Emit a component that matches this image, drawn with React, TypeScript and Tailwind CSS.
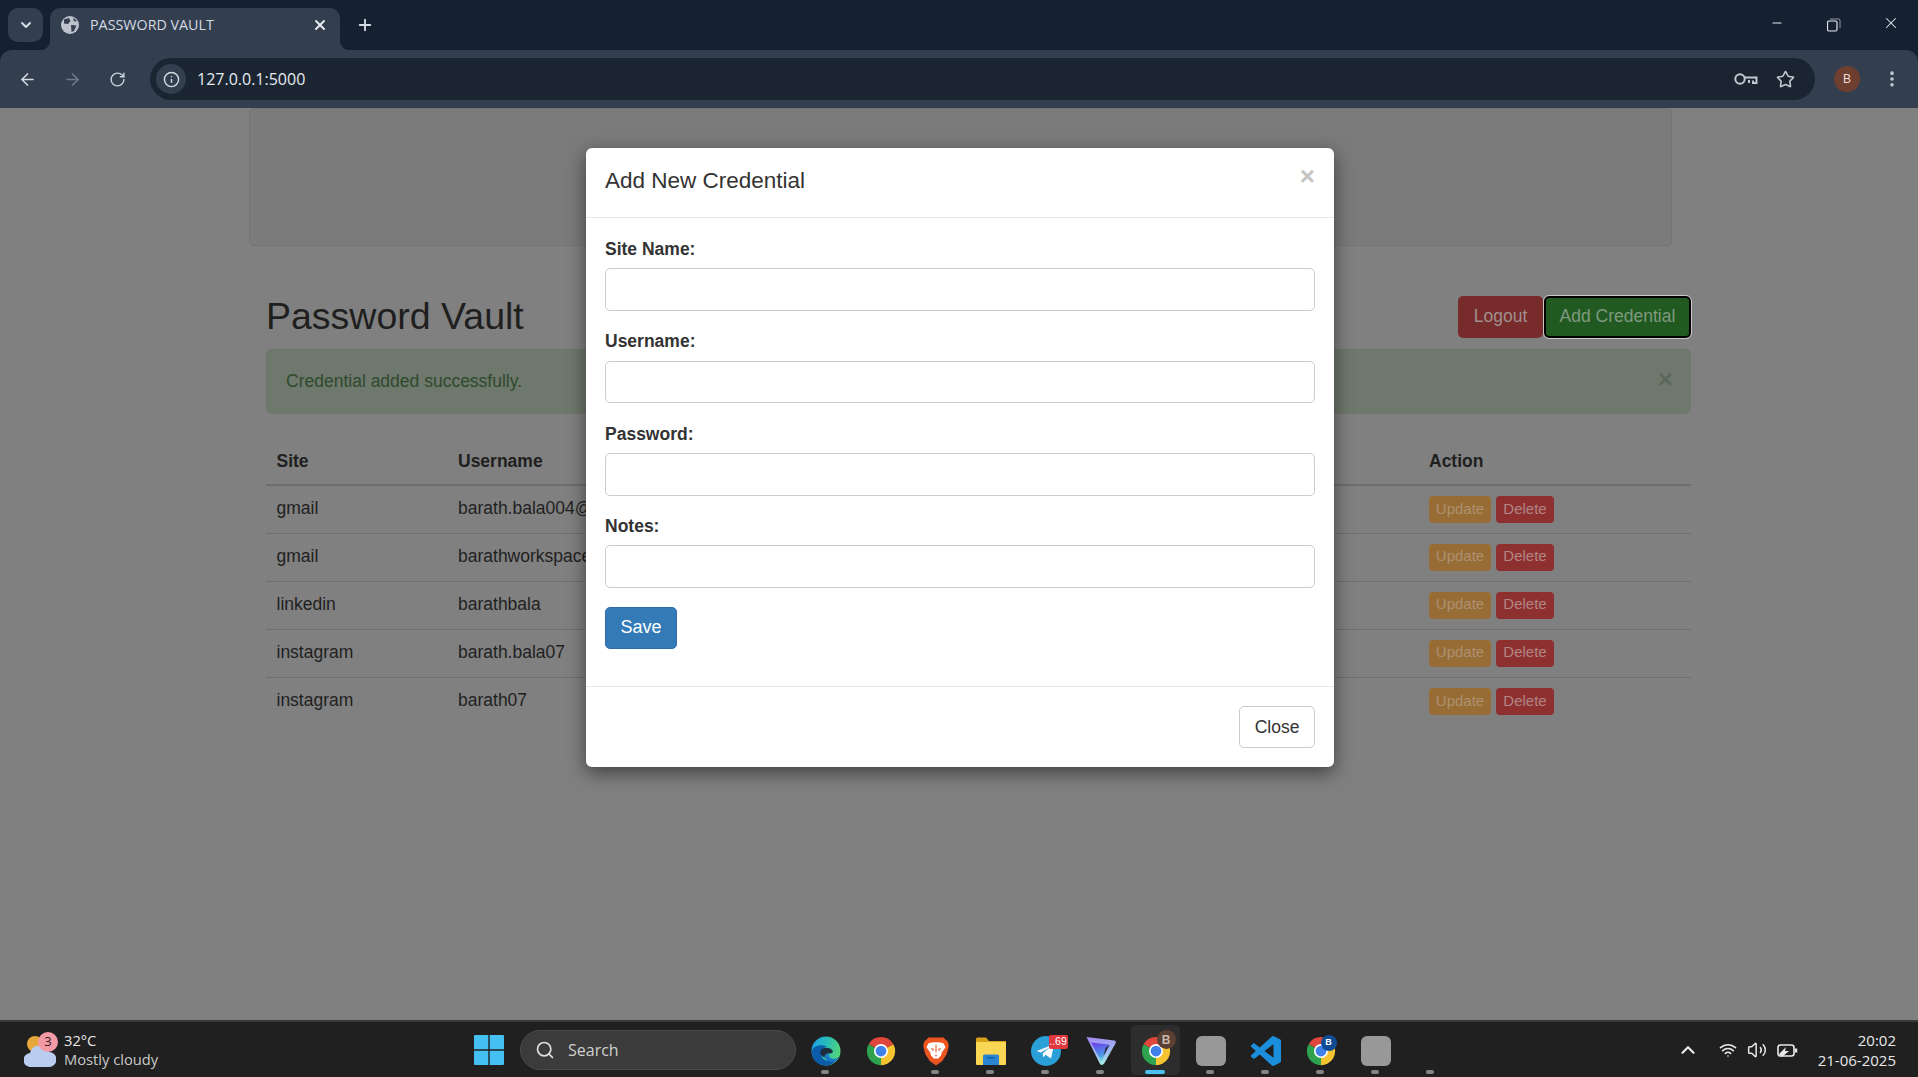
import { ArrowLeft, ArrowRight, ChevronDown, ChevronUp, EllipsisVertical, Info, Minus, Plus, RotateCw, Search, Star, Volume2, Wifi, X } from 'lucide-react';

const rows = [
  { site: 'gmail', user: 'barath.bala004@' },
  { site: 'gmail', user: 'barathworkspace' },
  { site: 'linkedin', user: 'barathbala' },
  { site: 'instagram', user: 'barath.bala07' },
  { site: 'instagram', user: 'barath07' },
];

const fields = ['Site Name:', 'Username:', 'Password:', 'Notes:'];

function ChromeLogo() {
  return (
    <svg width="30" height="30" viewBox="0 0 24 24">
      <path d="M12 12 L21.9 6.5 A11.4 11.4 0 0 0 2.1 6.5 Z" fill="#e0463a" />
      <path d="M12 12 L2.1 6.5 A11.4 11.4 0 0 0 12 23.4 Z" fill="#2fa24f" />
      <path d="M12 12 L12 23.4 A11.4 11.4 0 0 0 21.9 6.5 Z" fill="#f6c331" />
      <circle cx="12" cy="12" r="5.6" fill="#fff" />
      <circle cx="12" cy="12" r="4.3" fill="#3f80ea" />
    </svg>
  );
}

function EdgeLogo() {
  return (
    <svg width="30" height="30" viewBox="0 0 24 24">
      <defs>
        <linearGradient id="edgeA" x1="0" y1="0.2" x2="1" y2="0.5">
          <stop offset="0" stopColor="#1a9fe6" />
          <stop offset="0.55" stopColor="#2dbfb0" />
          <stop offset="1" stopColor="#55d678" />
        </linearGradient>
      </defs>
      <circle cx="12" cy="12" r="11.6" fill="url(#edgeA)" />
      <path d="M0.5 12.5 C1.5 8 8 6 12.5 8.5 C9 9.5 7.2 13 8.6 16.5 C10.5 20.5 16 21 21.5 17.5 C19 21.5 15.5 23.6 12 23.6 C5.8 23.6 0.5 18.5 0.5 12.5 Z" fill="#0d5cab" />
      <path d="M7.6 12 C9 8.6 15 8.4 17.2 11.5 C18 12.8 16.6 14 14.6 14 C12.2 14 10.6 15 11.2 17.2 C8.6 16.6 6.8 14.2 7.6 12 Z" fill="#1b2c3c" />
      <path d="M11.2 17.2 C10.6 15 12.2 14 14.6 14 C13.6 15 14 17 16.6 18 C18.6 18.7 20.6 18.2 23 16 C21.8 18.8 19.6 20.4 17 20.6 C14.4 20.8 11.8 19.6 11.2 17.2 Z" fill="#1a78c8" />
    </svg>
  );
}

function BraveLogo() {
  return (
    <svg width="30" height="30" viewBox="0 0 24 24">
      <path d="M6 1.2 H18 L21.6 4.8 L22.2 8 L20.5 14.5 L17 20 L12 23.6 L7 20 L3.5 14.5 L1.8 8 L2.4 4.8 Z" fill="#ee5420" />
      <path d="M6 5.8 L9.6 5 H14.4 L18 5.8 L19.6 9 L16.6 13.2 L16 15.6 L13.8 18 H10.2 L8 15.6 L7.4 13.2 L4.4 9 Z" fill="#fff" />
      <path d="M7.8 9.4 L10.8 10.4 L9.4 12.4 Z M16.2 9.4 L13.2 10.4 L14.6 12.4 Z M10.6 15 H13.4 L12 16.6 Z M11.4 7 H12.6 V13 H11.4 Z" fill="#ee8a66" />
    </svg>
  );
}

function FolderLogo() {
  return (
    <svg width="30" height="30" viewBox="0 0 30 30">
      <path d="M0 3 a1.5 1.5 0 0 1 1.5 -1.5 H10 L13 5 H30 V10 H0 Z" fill="#d9a21b" />
      <rect x="0" y="6" width="30" height="23" rx="1" fill="#fad655" />
      <path d="M7 20 a1.5 1.5 0 0 1 1.5 -1.5 H21.5 A1.5 1.5 0 0 1 23 20 V29 H7 Z" fill="#2c85d0" />
      <rect x="11" y="21" width="8" height="1.5" fill="#0f5ea8" />
    </svg>
  );
}

function TelegramLogo() {
  return (
    <div className="relative h-[30px] w-[30px]">
      <svg width="30" height="30" viewBox="0 0 24 24">
        <circle cx="12" cy="12" r="12" fill="#2b9fd8" />
        <path d="M4.5 12 L18.5 6.5 L16 18 L11.8 15 L9.7 17 L9.4 13.8 L15.5 8.8 L7.8 13.2 Z" fill="#fff" />
      </svg>
      <span className="absolute -right-[7px] -top-[1px] flex h-[14px] w-[19px] items-center justify-center rounded-[2px] bg-[#e0383e] font-['Liberation_Sans'] text-[10.5px] text-white">
        ..69
      </span>
    </div>
  );
}

function ProtonLogo() {
  return (
    <svg width="30" height="30" viewBox="0 0 30 30">
      <defs>
        <linearGradient id="protonA" x1="0.3" y1="0" x2="0.55" y2="1">
          <stop offset="0" stopColor="#a58cf5" />
          <stop offset="0.6" stopColor="#9fbcf2" />
          <stop offset="1" stopColor="#a8f2e8" />
        </linearGradient>
        <linearGradient id="protonB" x1="0.3" y1="0" x2="0.55" y2="1">
          <stop offset="0" stopColor="#6a42e8" />
          <stop offset="0.6" stopColor="#4f8ee8" />
          <stop offset="1" stopColor="#6fe2d8" />
        </linearGradient>
      </defs>
      <path d="M0.5 1 L28.5 4.5 Q30.5 5 29.5 7.5 L18.5 27 Q15.5 31 13.5 27 Z" fill="url(#protonA)" />
      <path d="M5 6.5 L23 8.5 L15.5 26 Z" fill="url(#protonB)" />
      <path d="M19.5 12 L24 8.5 L17.5 20 Z" fill="#2b2b45" />
    </svg>
  );
}

function VsCodeLogo() {
  return (
    <svg width="30" height="30" viewBox="0 0 24 24">
      <path d="M23.15 2.587L18.21.21a1.494 1.494 0 0 0-1.705.29l-9.46 8.63-4.12-3.128a.999.999 0 0 0-1.276.057L.327 7.261A1 1 0 0 0 .326 8.74L3.899 12 .326 15.26a1 1 0 0 0 .001 1.479L1.65 17.94a.999.999 0 0 0 1.276.057l4.12-3.128 9.46 8.63a1.492 1.492 0 0 0 1.704.29l4.942-2.377A1.5 1.5 0 0 0 24 20.06V3.939a1.5 1.5 0 0 0-.85-1.352zm-5.146 14.861L10.826 12l7.178-5.448v10.896z" fill="#1c8fdc" />
    </svg>
  );
}

function GrayTile() {
  return <div className="h-[30px] w-[30px] rounded-[6px] bg-[#989898]" />;
}

function Slot({ children, dot = true, active = false }: { children?: React.ReactNode; dot?: boolean; active?: boolean }) {
  return (
    <div className="relative flex h-full w-[55px] items-center justify-center pt-[3px]">
      {active && <div className="absolute bottom-[2px] left-[3px] top-[3px] w-[49px] rounded-[5px] bg-[#2d2d2d]" />}
      <div className="relative">{children}</div>
      {dot && !active && <div className="absolute bottom-[3px] left-[23px] h-[4px] w-[8px] rounded-full bg-[#858585]" />}
      {active && <div className="absolute bottom-[3px] left-[17px] h-[4px] w-[20px] rounded-full bg-[#4cc2f1]" />}
    </div>
  );
}

function BrowserChrome() {
  return (
    <div className="bg-[#152030] font-['Open_Sans',sans-serif] text-[#d5dbe3]">
      <div className="flex h-[50px] items-start">
        <div className="ml-[8px] mt-[8px] flex h-[34px] w-[35px] items-center justify-center rounded-[10px] bg-[#333e4f]">
          <ChevronDown size={16} strokeWidth={3} />
        </div>
        <div className="relative ml-[7px] mt-[8px] flex h-[42px] w-[290px] items-center rounded-t-[10px] bg-[#333e4f] pb-[8px] pl-[11px]">
          <div className="absolute -left-[10px] bottom-0 h-[10px] w-[10px] bg-[radial-gradient(circle_at_0_0,#152030_10px,#333e4f_10.5px)]" />
          <div className="absolute -right-[10px] bottom-0 h-[10px] w-[10px] bg-[radial-gradient(circle_at_100%_0,#152030_10px,#333e4f_10.5px)]" />
          <svg width="18" height="18" viewBox="0 0 18 18">
            <circle cx="9" cy="9" r="9" fill="#bcc3cc" />
            <path d="M3 3.5 L8 2 L9.5 5 L7 8 L3 7.5 Z M10 9 L15.5 9.5 L13 15 L10.5 16 Z M12 1.5 L16 5 L13 5.5 Z" fill="#333e4f" />
          </svg>
          <span className="ml-[11px] w-[222px] text-[14.3px]">PASSWORD VAULT</span>
          <X size={16} strokeWidth={3} className="text-[#e6eaef]" />
        </div>
        <Plus size={18} strokeWidth={2.5} className="ml-[16px] mt-[16px]" />
        <div className="ml-auto mt-[14px] flex w-[150px] items-start text-[#e6eaef]">
          <Minus size={14} strokeWidth={1.8} className="ml-[2px] mt-[2px]" />
          <svg width="14" height="14" viewBox="0 0 14 14" fill="none" stroke="currentColor" className="ml-[43px] mt-[4px]">
            <rect x="0.5" y="3" width="9.5" height="10" rx="1.5" strokeWidth="1.2" />
            <path d="M3 1 H11.5 A1.5 1.5 0 0 1 13 2.5 V10" strokeWidth="1" opacity="0.6" />
          </svg>
          <X size={18} strokeWidth={1.4} className="ml-[41px]" />
        </div>
      </div>
      <div className="flex h-[58px] items-center rounded-t-[12px] bg-[#333e4f]">
        <ArrowLeft size={19} strokeWidth={2} className="ml-[18px]" />
        <ArrowRight size={19} strokeWidth={2} className="ml-[26px] text-[#707a89]" />
        <RotateCw size={17} strokeWidth={2} className="ml-[27px] text-[#c9d0d9]" />
        <div className="ml-[24px] flex h-[42px] w-[1665px] items-center rounded-full bg-[#1b2532] pl-[6px]">
          <div className="flex h-[30px] w-[30px] items-center justify-center rounded-full bg-[#333e4f]">
            <Info size={17} strokeWidth={2} />
          </div>
          <span className="ml-[11px] text-[16px] text-[#e6eaef]">127.0.0.1:5000</span>
          <svg width="24" height="14" viewBox="0 0 24 14" fill="none" stroke="#c1c8d1" strokeWidth="2" className="ml-auto">
            <circle cx="6" cy="7" r="4.7" />
            <path d="M11 5.5 H22.5 V11 H19 V8.5 M15 8 V11" />
          </svg>
          <Star size={19} strokeWidth={2} className="ml-[18px] mr-[20px] text-[#c1c8d1]" />
        </div>
        <div className="ml-[19px] flex h-[26px] w-[26px] items-center justify-center rounded-full bg-[#6e3f2e] font-['Liberation_Sans'] text-[12px] text-[#f0dcd4]">
          B
        </div>
        <EllipsisVertical size={20} strokeWidth={2.4} className="ml-[22px] text-[#c1c8d1]" />
      </div>
    </div>
  );
}

function Modal() {
  return (
    <div className="absolute left-[586px] top-[40px] w-[748px] rounded-[6px] bg-white text-[#333] shadow-[0_6px_19px_rgba(0,0,0,0.5)]">
      <div className="relative h-[70px] border-b border-[#e5e5e5] px-[19px] pt-[17px] text-[22.5px] leading-[32px]">
        Add New Credential
        <span className="absolute right-[19px] top-[12px] text-[26px] font-bold leading-[32px] text-[#c4c4c4]">×</span>
      </div>
      <form className="h-[468px] px-[19px] pt-[19px]">
        {fields.map((label) => (
          <div key={label} className="mb-[18.3px]">
            <label className="mb-[6.4px] block text-[17.5px] font-bold leading-[25px]">{label}</label>
            <input className="block h-[42.6px] w-full rounded-[5px] border border-[#ccc] bg-white" />
          </div>
        ))}
        <button type="button" className="mt-[1px] h-[42px] w-[72px] rounded-[5px] border border-[#2e6da4] bg-[#337ab7] pb-[2px] text-[18px] text-white">
          Save
        </button>
      </form>
      <div className="flex h-[81px] items-start justify-end border-t border-[#e5e5e5] px-[19px] pt-[19px]">
        <button type="button" className="h-[42px] w-[76px] rounded-[5px] border border-[#ccc] bg-white text-[17.5px] text-[#333]">
          Close
        </button>
      </div>
    </div>
  );
}

function VaultPage() {
  return (
    <main className="relative flex-1 overflow-hidden bg-[#808080] font-['Liberation_Sans',sans-serif] text-[17.5px] text-[#1f1f1f]">
      <div className="ml-[249px] h-[138px] w-[1423px] rounded-[5px] border border-[#737373] bg-[#7b7b7b]" />
      <div className="ml-[266px] w-[1425px]">
        <div className="mt-[50px] flex h-[42px] items-center justify-between">
          <h2 className="pb-[2px] text-[37.5px] leading-[44px]">Password Vault</h2>
          <div className="flex">
            <button className="h-[42px] w-[85px] rounded-[5px] bg-[#772c2b] pb-[2px] text-[#a08e8e]">Logout</button>
            <button className="ml-[1px] h-[42px] w-[147px] rounded-[5px] border-2 border-black bg-[#215a21] pb-[2px] text-[#7f997f] outline outline-1 outline-[#c8c8c8]">
              Add Credential
            </button>
          </div>
        </div>
        <div className="mt-[11px] flex h-[65px] items-center justify-between rounded-[5px] bg-[#6f786c] pl-[20px] pr-[18px] text-[#2e4a2e]">
          <span>Credential added successfully.</span>
          <span className="pb-[5px] text-[26px] font-bold leading-none text-[#5c685c]">×</span>
        </div>
        <table className="mt-[23px] w-full table-fixed border-collapse">
          <colgroup>
            <col className="w-[182px]" />
            <col className="w-[971px]" />
            <col />
          </colgroup>
          <thead>
            <tr className="h-[48px] border-b-2 border-[#6d6d6d] text-left">
              <th className="pl-[10.5px] pt-[1px]">Site</th>
              <th className="pl-[10px] pt-[1px]">Username</th>
              <th className="pl-[10px] pt-[1px]">Action</th>
            </tr>
          </thead>
          <tbody>
            {rows.map((row, i) => (
              <tr key={i} className="h-[48px] border-t border-[#6f6f6f] first:border-t-0">
                <td className="pb-[2px] pl-[10.5px]">{row.site}</td>
                <td className="pb-[2px] pl-[10px]">{row.user}</td>
                <td className="pl-[10px]">
                  <div className="flex gap-[5px] text-[15px]">
                    <button className="h-[27px] w-[62px] rounded-[4px] bg-[#976c35] pb-[1px] text-[#ad9170]">Update</button>
                    <button className="h-[27px] w-[58px] rounded-[4px] bg-[#8f3030] pb-[1px] text-[#b08585]">Delete</button>
                  </div>
                </td>
              </tr>
            ))}
          </tbody>
        </table>
      </div>
      <Modal />
    </main>
  );
}

function Taskbar() {
  return (
    <footer className="flex h-[57px] items-center border-t-2 border-[#3a3a3a] bg-[#202020] font-['Open_Sans',sans-serif] text-[#e8e8e8]">
      <div className="flex w-[474px] items-center pl-[24px]">
        <div className="relative h-[36px] w-[32px]">
          <svg width="32" height="36" viewBox="0 0 32 36">
            <circle cx="11" cy="12" r="8" fill="#e6a73c" />
            <path d="M7 35 a7 7 0 0 1 -1 -14 a10 10 0 0 1 19 -1 a7.5 7.5 0 0 1 0 15 Z" fill="#b9cdf0" />
          </svg>
          <span className="absolute left-[14px] top-0 flex h-[20px] w-[20px] items-center justify-center rounded-full bg-[#f49aa6] text-[13px] text-[#2a1a1a]">3</span>
        </div>
        <div className="ml-[8px] text-[14.7px] leading-[19px]">
          <div>32°C</div>
          <div className="text-[#c9c9c9]">Mostly cloudy</div>
        </div>
      </div>
      <svg width="30" height="30" viewBox="0 0 30 30">
        <path d="M0 1 a1 1 0 0 1 1 -1 H14.3 V14.3 H0 Z M15.7 0 H29 a1 1 0 0 1 1 1 V14.3 H15.7 Z M0 15.7 H14.3 V30 H1 a1 1 0 0 1 -1 -1 Z M15.7 15.7 H30 V29 a1 1 0 0 1 -1 1 H15.7 Z" fill="#45c0f2" />
      </svg>
      <div className="ml-[16px] flex h-[40px] w-[276px] items-center rounded-full border border-[#4a4a4a] bg-[#3b3b3b] pl-[14px]">
        <Search size={20} strokeWidth={2} className="text-[#e0e0e0]" />
        <span className="ml-[13px] text-[16px] text-[#d0d0d0]">Search</span>
      </div>
      <div className="ml-[2px] flex h-full">
        <Slot><EdgeLogo /></Slot>
        <Slot dot={false}><ChromeLogo /></Slot>
        <Slot><BraveLogo /></Slot>
        <Slot><FolderLogo /></Slot>
        <Slot><TelegramLogo /></Slot>
        <Slot><ProtonLogo /></Slot>
        <Slot active>
          <div className="relative h-[30px] w-[30px]">
            <ChromeLogo />
            <span className="absolute -right-[5px] -top-[6px] flex h-[19px] w-[19px] items-center justify-center rounded-full bg-[#5a3f33] font-['Liberation_Sans'] text-[12px] font-bold text-[#c8b8ac]">B</span>
          </div>
        </Slot>
        <Slot><GrayTile /></Slot>
        <Slot><VsCodeLogo /></Slot>
        <Slot>
          <div className="relative h-[30px] w-[30px]">
            <ChromeLogo />
            <span className="absolute -right-[1px] -top-[1px] flex h-[16px] w-[16px] items-center justify-center rounded-full bg-[#0f4c94] font-['Liberation_Sans'] text-[9px] font-bold text-white">B</span>
          </div>
        </Slot>
        <Slot><GrayTile /></Slot>
        <Slot />
      </div>
      <ChevronUp size={22} strokeWidth={2.4} className="ml-[219px]" />
      <Wifi size={18} strokeWidth={2.2} className="ml-[20px]" />
      <Volume2 size={20} strokeWidth={1.8} className="ml-[10px]" />
      <svg width="22" height="16" viewBox="0 0 22 16" fill="none" stroke="#e8e8e8" strokeWidth="1.6" className="ml-[10px]">
        <rect x="1" y="3" width="16" height="11" rx="2.5" />
        <path d="M19 6.5 V10.5" strokeWidth="2.4" />
        <path d="M2 12 L9 5 L8 9 H12 L5 15 Z" fill="#e8e8e8" stroke="none" />
      </svg>
      <div className="ml-auto pr-[22px] text-right text-[15px] leading-[20px]">
        <div>20:02</div>
        <div>21-06-2025</div>
      </div>
    </footer>
  );
}

export default function App() {
  return (
    <div className="flex h-screen w-full flex-col overflow-hidden">
      <BrowserChrome />
      <VaultPage />
      <Taskbar />
    </div>
  );
}
